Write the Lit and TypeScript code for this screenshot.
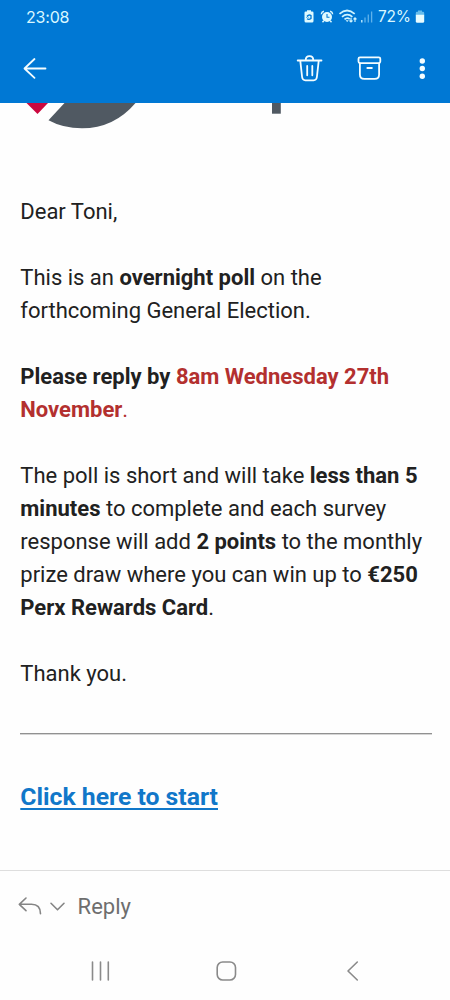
import { LitElement, html, css } from "lit";
import { customElement } from "lit/decorators.js";

@customElement("status-bar")
class StatusBar extends LitElement {
  static styles = css`
    :host { display: flex; height: 34px; align-items: center; justify-content: space-between; padding: 0 25px 0 26px; color: #d9f7ff; }
    .time { font: 400 16px/20px Inter, sans-serif; letter-spacing: -0.2px; }
    .right { display: flex; align-items: center; }
    .pct { font: 400 15.500px/20px Inter, sans-serif; letter-spacing: -0.2px; margin-left: 5px; width: 36px; white-space: nowrap; }
    svg { display: block; }
  `;
  render() {
    return html`
      <span class="time">23:08</span>
      <div class="right">
        <svg width="70" height="20" viewBox="303 7 70 20" fill="none">
          <path d="M307 10.200h4v1.300h1.200q1.300 0 1.300 1.300v8.200q0 1.500-1.500 1.500h-6q-1.500 0-1.500-1.500v-8.200q0-1.300 1.300-1.300h1.200z" fill="#dffaff"/>
          <path d="M307 16.300q2-2.200 4-.7v2.800q-2 1.700-4 .4" stroke="#0078d4" stroke-width="1.300"/>
          <path d="M306.500 18l1-1.800 1.300 1.500" stroke="#0078d4" stroke-width=".7"/>
          <circle cx="327" cy="17" r="5" fill="#dffaff"/>
          <path d="M321.300 14.200q.2-2.300 2.600-2.900M332.700 14.200q-.2-2.300-2.600-2.900M323.800 20.800l-1.300 1.500M330.200 20.800l1.300 1.500" stroke="#dffaff" stroke-width="1.400"/>
          <path d="M327 14v3.200h2.500" stroke="#0078d4" stroke-width="1.100"/>
          <path d="M339.500 13.800q7.500-6.600 15.200 0M342 16.800q5.200-4.500 10.400 0M344.500 19.400q2.700-2.400 5.300-.3" stroke="#d0f5ff" stroke-width="1.700"/>
          <path d="M345.600 20.300h3.200l-1.600 1.800z" fill="#d0f5ff"/>
          <path d="M351 17.800v4M349.500 20.500l1.500 1.500 1.500-1.500M355 22v-4M353.500 19.300l1.500-1.500 1.500 1.500" stroke="#d0f5ff" stroke-width="1.200"/>
          <path d="M361.800 20v2.500" stroke="#bcecff" stroke-width="1.400"/>
          <path d="M365 17.500v5M368.300 14.500v8M371.600 11.500v11" stroke="#5fb2eb" stroke-width="1.300"/>
        </svg>
        <span class="pct">72%</span>
        <svg width="11" height="16" viewBox="414 9 11 16">
          <path d="M418 10.500h4v1.300h1q1.200 0 1.200 1.200v2.200h-8.400v-2.200q0-1.200 1.200-1.200h1z" fill="#65bcec"/>
          <path d="M415.800 14.800h8.400v6.400q0 1.500-1.500 1.500h-5.400q-1.500 0-1.500-1.500z" fill="#e8fcff"/>
        </svg>
      </div>`;
  }
}

@customElement("mail-toolbar")
class MailToolbar extends LitElement {
  static styles = css`
    :host { display: flex; height: 69px; align-items: center; justify-content: space-between; padding: 0 14px 0 20px; box-sizing: border-box; }
    svg { display: block; fill: none; stroke: #f4fdff; stroke-width: 1.8; stroke-linecap: round; stroke-linejoin: round; }
    .actions { display: flex; align-items: center; gap: 30px; }
    .dots { fill: #f4fdff; stroke: none; margin-left: -7px; }
  `;
  render() {
    return html`
      <svg width="30" height="30" viewBox="20 54 30 30"><path d="M45.500 68.500H24.700M34.500 59l-10 9.500 10 9.300"/></svg>
      <div class="actions">
        <svg width="30" height="30" viewBox="295 54 30 30"><path d="M297.700 60.500h23.800M305.700 60.300q0-4.200 3.800-4.200t3.800 4.200M300.300 60.800l1.800 16.200q.4 3.300 3.300 3.300h8.200q2.900 0 3.300-3.300l1.800-16.200M307.200 66v9.300M312.300 66v9.300"/></svg>
        <svg width="30" height="30" viewBox="355 54 30 30"><rect x="358.500" y="57.300" width="21.800" height="5.800" rx="1.500"/><path d="M359.900 63.300v11.200q0 4.400 4.400 4.400h10.400q4.400 0 4.400-4.400V63.300M367.300 68h4.600"/></svg>
        <svg class="dots" width="28" height="30" viewBox="408 54 28 30"><circle cx="422.300" cy="61" r="2.700"/><circle cx="422.300" cy="68.500" r="2.700"/><circle cx="422.300" cy="76.200" r="2.700"/></svg>
      </div>`;
  }
}

@customElement("mail-body")
class MailBody extends LitElement {
  static styles = css`
    :host { display: block; height: 767px; overflow: hidden; color: #212121; font-size: 22px; line-height: 33px; }
    .logo { display: block; }
    .text { padding: 62px 17.600px 0 20.300px; }
    p { margin: 0 0 33px; white-space: nowrap; }
    b { font-weight: 700; }
    .red { color: #b3302f; }
    hr { border: 0; border-top: 1px solid #919191; border-bottom: 1px solid #d5d5d5; margin: 43px 0 44px; }
    a { color: #1177c9; font-size: 24.750px; line-height: 36px; font-weight: 700; text-decoration: underline; text-decoration-thickness: 2px; text-underline-offset: 3px; }
  `;
  render() {
    return html`
      <svg class="logo" width="450" height="30" viewBox="0 103 450 30">
        <path d="M26.500 103h21.500L37.500 114z" fill="#cb083f"/>
        <path d="M64.500 103h71Q114 128.300 82 128.300 63 128.300 48.500 120.300z" fill="#505962"/>
        <path d="M272 103h8.800v10.700h-8.800z" fill="#505962"/>
      </svg>
      <div class="text">
        <p>Dear Toni,</p>
        <p>This is an <b>overnight poll</b> on the<br>forthcoming General Election.</p>
        <p><b>Please reply by <span class="red">8am Wednesday 27th<br>November</span></b><span class="red">.</span></p>
        <p>The poll is short and will take <b>less than 5<br>minutes</b> to complete and each survey<br>response will add <b>2 points</b> to the monthly<br>prize draw where you can win up to <b>€250<br>Perx Rewards Card</b>.</p>
        <p>Thank you.</p>
        <hr>
        <a>Click here to start</a>
      </div>`;
  }
}

@customElement("reply-bar")
class ReplyBar extends LitElement {
  static styles = css`
    :host { display: flex; box-sizing: border-box; height: 72px; border-top: 1px solid #dedede; align-items: center; padding-left: 16px; color: #6e6e6e; font-size: 22px; }
    svg { display: block; fill: none; stroke: #858585; stroke-width: 1.600; stroke-linecap: round; stroke-linejoin: round; margin-right: 9.600px; }
  `;
  render() {
    return html`
      <svg width="52" height="30" viewBox="16 891.500 52 30"><path d="M26 897.500l-6.700 6.300 6.700 6.300M19.500 903.800h12q9 0 9 9.500M51 902.800l6.500 6.500 6.500-6.500"/></svg>
      <span>Reply</span>`;
  }
}

@customElement("system-nav")
class SystemNav extends LitElement {
  static styles = css`
    :host { display: flex; height: 58px; align-items: center; justify-content: space-between; padding: 0 86px 0 89px; }
    svg { display: block; fill: none; stroke: #8a8a8a; stroke-width: 1.600; stroke-linecap: round; stroke-linejoin: round; }
  `;
  render() {
    return html`
      <svg width="24" height="24" viewBox="89 959 24 24"><path d="M92.500 962v18M100.500 962v18M108.300 962v18"/></svg>
      <svg width="24" height="24" viewBox="214.800 959 24 24"><rect x="217" y="962" width="18.300" height="18" rx="5.500"/></svg>
      <svg width="24" height="24" viewBox="340 959 24 24"><path d="M357.300 962l-9.300 9 9.300 9"/></svg>`;
  }
}

@customElement("app-root")
class AppRoot extends LitElement {
  static styles = css`
    :host { display: block; width: 450px; height: 1000px; overflow: hidden; background: #fefefe; font-family: Roboto, sans-serif; }
    header { background: #0078d4; }
  `;
  render() {
    return html`
      <header><status-bar></status-bar><mail-toolbar></mail-toolbar></header>
      <mail-body></mail-body>
      <reply-bar></reply-bar>
      <system-nav></system-nav>`;
  }
}
